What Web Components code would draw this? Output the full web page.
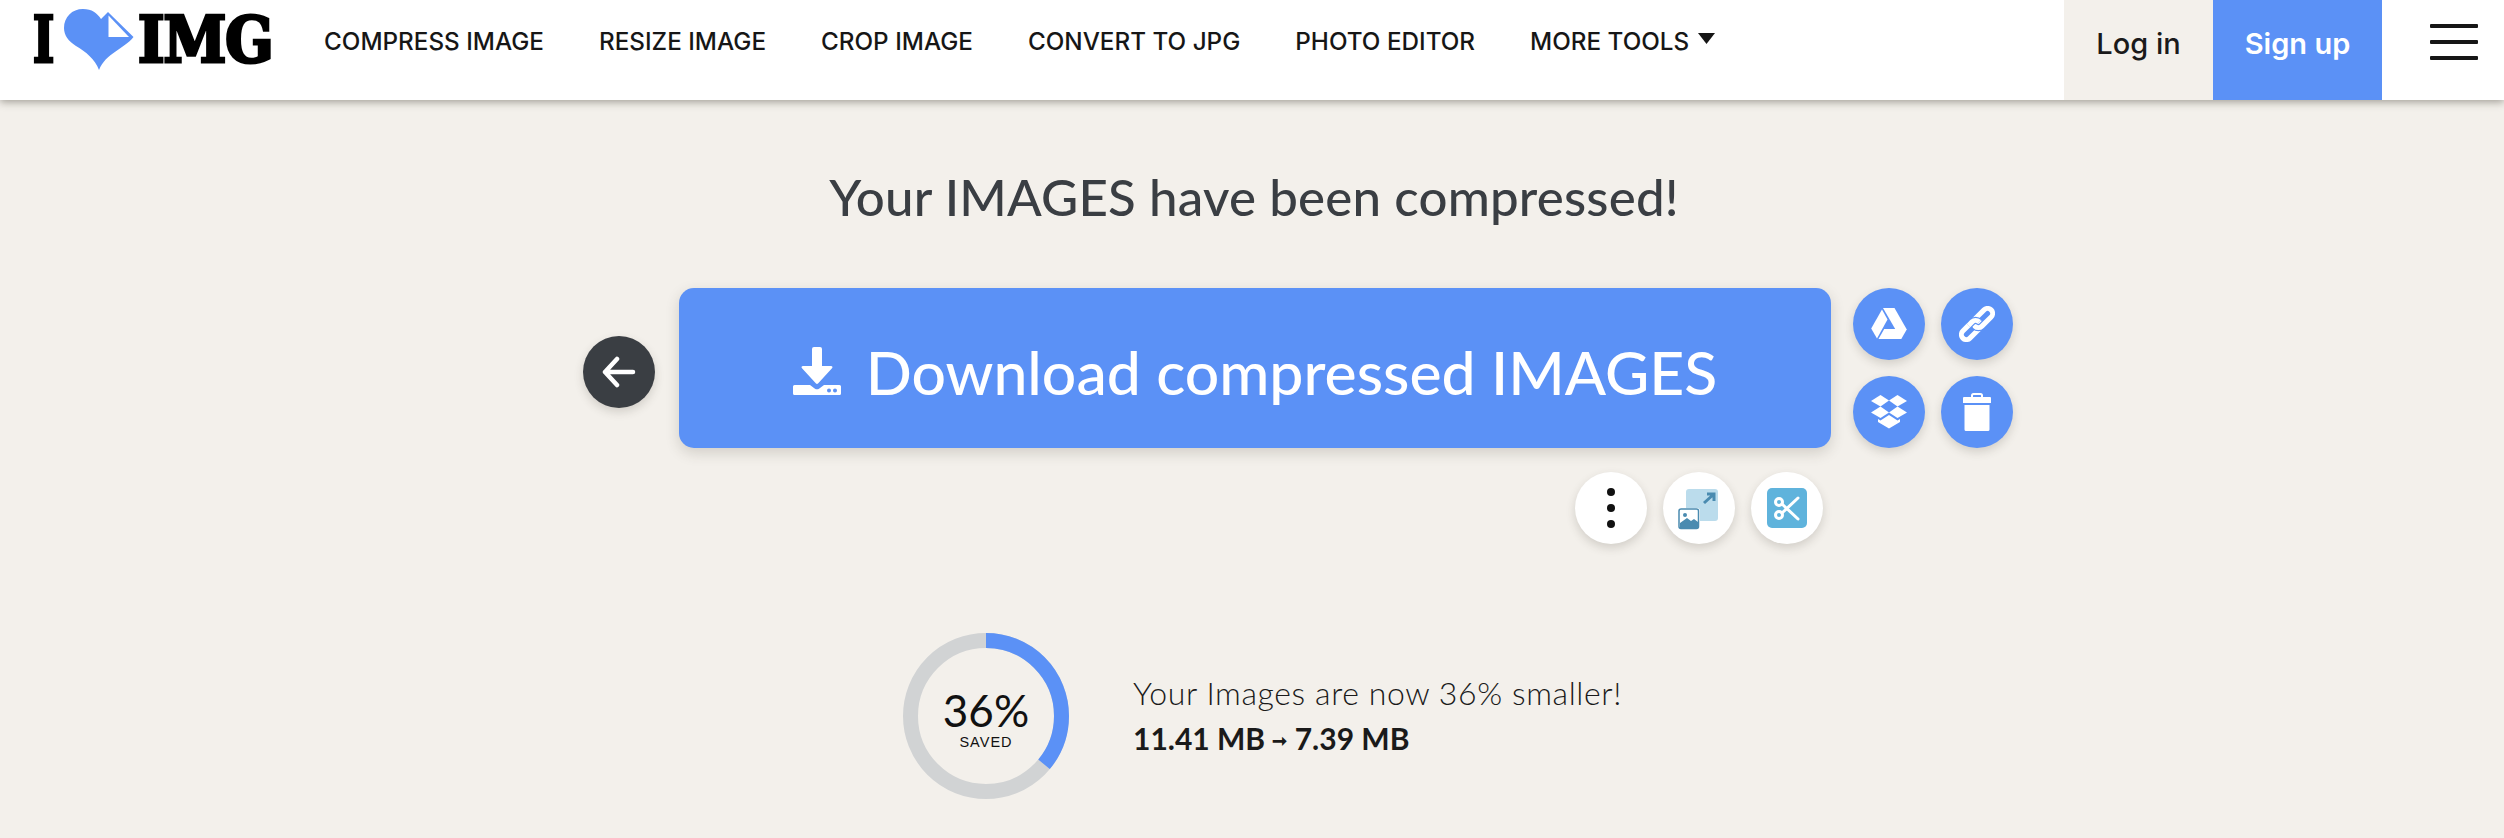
<!DOCTYPE html>
<html lang="en">
<head>
<meta charset="utf-8">
<title>Your IMAGES have been compressed!</title>
<style>
  html, body { margin: 0; height: 100%; overflow: hidden; background: #f3f0eb; }
  body { font-family: "Lato", "Open Sans", sans-serif; color: #1a1a1a; }
</style>
</head>
<body>
<site-header></site-header>
<result-panel></result-panel>

<script>
const BLUE = "#5b91f6";

class SiteLogo extends HTMLElement {
  constructor() {
    super();
    this.attachShadow({ mode: "open" });
    this.shadowRoot.innerHTML = `
<style>
  :host { display: flex; align-items: center; height: 100px; width: 289px; padding-left: 33px; box-sizing: border-box; flex: none; }
  .word {
    font: 700 63px/1 "DejaVu Serif Condensed", "DejaVu Serif", serif;
    color: #000;
    -webkit-text-stroke: 3px #000;
    letter-spacing: -1px;
    display: inline-block;
    transform-origin: left center;
    margin-top: -20px;
  }
  .i { width: 30px; transform: scaleX(.8); }
  .img { transform: scaleX(1); margin-left: 1px; }
  svg { width: 71px; height: 62px; margin: -21px 2px 0 1px; flex: none; }
</style>
<span class="word i">I</span>
<svg viewBox="0 0 71 62">
  <path d="M35 61C31 50 22 43 12 37C4 32 0 26 0 19C0 8 8 0 19 0C28 0 33 4 37 10L44 3L69.500 28C60 40 42 44 35 61Z" fill="${BLUE}"/>
  <path d="M44.500 6.500 65 28H44.500Z" fill="#fff"/>
</svg>
<span class="word img">IMG</span>`;
  }
}

class NavLink extends HTMLElement {
  constructor() {
    super();
    this.attachShadow({ mode: "open" });
    this.shadowRoot.innerHTML = `
<style>
  :host { display: inline-flex; align-items: center; gap: 9px; white-space: nowrap; font: 500 24.250px/1 "Inter", sans-serif; color: #161616; }
  svg { width: 17px; height: 11px; margin-top: -7px; display: none; }
  :host([caret]) svg { display: block; }
</style>
<slot></slot>
<svg viewBox="0 0 17 11"><path d="M0 0H17L8.500 11Z" fill="#161616"/></svg>`;
  }
}

class SiteHeader extends HTMLElement {
  constructor() {
    super();
    this.attachShadow({ mode: "open" });
    this.shadowRoot.innerHTML = `
<style>
  :host { display: flex; height: 100px; background: #fff; box-shadow: 0 2px 8px rgba(60,55,45,.45); position: relative; font-family: "Inter", sans-serif; }
  nav { display: flex; align-items: center; gap: 55px; flex: 1; padding: 0 0 0 35px; height: 84px; }
  .auth { display: flex; align-items: center; justify-content: center; height: 100px; font-size: 29px; padding-bottom: 14px; box-sizing: border-box; }
  .login { width: 149px; background: #f3f0eb; color: #1a1a1a; font-weight: 500; }
  .signup { width: 169px; background: ${BLUE}; color: #fff; font-weight: 600; }
  .burger { width: 122px; padding: 24px 26px 0 48px; box-sizing: border-box; display: flex; flex-direction: column; gap: 12px; }
  .burger i { display: block; height: 4px; width: 48px; background: #161616; border-radius: 1px; }
</style>
<site-logo></site-logo>
<nav>
  <nav-link>COMPRESS IMAGE</nav-link>
  <nav-link>RESIZE IMAGE</nav-link>
  <nav-link>CROP IMAGE</nav-link>
  <nav-link>CONVERT TO JPG</nav-link>
  <nav-link>PHOTO EDITOR</nav-link>
  <nav-link caret>MORE TOOLS</nav-link>
</nav>
<div class="auth login">Log in</div>
<div class="auth signup">Sign up</div>
<div class="burger"><i></i><i></i><i></i></div>`;
  }
}

class RoundBtn extends HTMLElement {
  constructor() {
    super();
    this.attachShadow({ mode: "open" });
    this.shadowRoot.innerHTML = `
<style>
  :host { display: flex; align-items: center; justify-content: center; width: 72px; height: 72px; border-radius: 50%; background: ${BLUE}; box-shadow: 0 4px 10px rgba(60,55,45,.18); }
  :host([tone="white"]) { background: #fff; }
  :host([tone="dark"]) { background: #3a3e43; }
  ::slotted(svg) { display: block; }
</style>
<slot></slot>`;
  }
}

class DownloadBtn extends HTMLElement {
  constructor() {
    super();
    this.attachShadow({ mode: "open" });
    this.shadowRoot.innerHTML = `
<style>
  :host { display: flex; align-items: center; justify-content: center; gap: 25px; height: 160px; padding-top: 8px; box-sizing: border-box; border-radius: 15px; background: ${BLUE}; color: #fff; font: 500 60.700px/1 "Lato", sans-serif; box-shadow: 0 5px 14px rgba(60,55,45,.18); white-space: nowrap; }
  svg { width: 48px; height: 48px; flex: none; margin-top: -2px; }
</style>
<svg viewBox="0 0 48 48" fill="#fff">
  <path d="M19 2a2 2 0 0 1 2-2h6a2 2 0 0 1 2 2v17h9c1.400 0 2 1.200 1 2.300L25 36.500c-.6.600-1.400.600-2 0L9 21.300C8 20.200 8.600 19 10 19h9Z"/>
  <path fill-rule="evenodd" d="M1.500 38h15.500l5 3.700c1.200.8 2.800.8 4 0l5-3.700h15.500a1.500 1.500 0 0 1 1.500 1.500v7a1.500 1.500 0 0 1-1.500 1.500h-45a1.500 1.500 0 0 1-1.500-1.500v-7a1.500 1.500 0 0 1 1.500-1.500ZM36 41.500a2 2 0 1 0 0 4 2 2 0 0 0 0-4Zm6 0a2 2 0 1 0 0 4 2 2 0 0 0 0-4Z"/>
</svg>
<slot></slot>`;
  }
}

class SavedRing extends HTMLElement {
  constructor() {
    super();
    this.attachShadow({ mode: "open" });
    const c = 2 * Math.PI * 75.5;
    const pct = +this.getAttribute("value") || 36;
    this.shadowRoot.innerHTML = `
<style>
  :host { display: grid; width: 166px; height: 166px; flex: none; }
  :host > * { grid-area: 1 / 1; }
  svg { width: 166px; height: 166px; }
  .label { display: flex; flex-direction: column; align-items: center; justify-content: center; padding-top: 5px; color: #111; }
  b { font: 400 44px/46px "Lato", sans-serif; }
  span { font: 400 14.500px/18px "Liberation Sans", sans-serif; letter-spacing: 1px; }
</style>
<svg viewBox="0 0 166 166" fill="none" stroke-width="15">
  <circle cx="83" cy="83" r="75.500" stroke="#d1d3d4"/>
  <circle cx="83" cy="83" r="75.500" stroke="${BLUE}" stroke-dasharray="${c * pct / 100} ${c}" transform="rotate(-90 83 83)"/>
</svg>
<div class="label"><b>${pct}%</b><span>SAVED</span></div>`;
  }
}

class ResultPanel extends HTMLElement {
  constructor() {
    super();
    this.attachShadow({ mode: "open" });
    this.shadowRoot.innerHTML = `
<style>
  :host { display: block; }
  h1 { margin: 0; padding: 67px 0 0 4px; text-align: center; font: 500 51px/60px "Lato", sans-serif; letter-spacing: .2px; color: #3a3e43; }
  .actions { display: grid; grid-template-columns: 72px 1152px 160px; column-gap: 23px; row-gap: 24px; justify-content: center; align-items: center; margin-top: 61px; padding-left: 94px; }
  .back { margin: 8px 0 0 -1px; }
  .side { display: grid; grid-template-columns: 72px 72px; gap: 16px; margin-left: -1px; }
  .tools { grid-column: 2; display: flex; justify-content: flex-end; gap: 16px; padding-right: 8px; }
  .stats { display: flex; align-items: center; gap: 64px; margin-top: 89px; padding-left: 903px; }
  .copy { font-family: "Lato", sans-serif; color: #1a1a1a; }
  .copy p { margin: 0; font-size: 32px; line-height: 42px; font-weight: 300; letter-spacing: .6px; }
  .copy strong { display: block; margin-top: 3px; font-size: 30px; line-height: 42px; font-weight: 700; }
  .copy small { font-size: 18px; vertical-align: 3px; }
</style>
<h1>Your IMAGES have been compressed!</h1>
<div class="actions">
  <round-btn class="back" tone="dark">
    <svg width="34" height="32" viewBox="0 0 34 32" fill="none" stroke="#fff" stroke-width="4.500" stroke-linecap="round" stroke-linejoin="round"><path d="M31 16H3M15 3 3 16l12 13"/></svg>
  </round-btn>
  <download-btn>Download compressed IMAGES</download-btn>
  <div class="side">
    <round-btn>
      <svg width="36" height="32" viewBox="0 0 36 32" fill="#fff"><path d="M12 0h11.500l12 21H24.200Z"/><path d="M11 1.500l5.500 10L6 30.500.2 20.500Z"/><path d="M7.500 31 13.200 21H36l-5.700 10Z"/></svg>
    </round-btn>
    <round-btn>
      <svg width="36" height="36" viewBox="0 0 36 36" fill="none" stroke-width="5">
        <g transform="rotate(-45 18 18)">
          <rect x="-2" y="13" width="23" height="10" rx="5" stroke="#fff"/>
          <rect x="15" y="13" width="23" height="10" rx="5" stroke="${BLUE}" stroke-width="7.500"/>
          <rect x="15" y="13" width="23" height="10" rx="5" stroke="#fff"/>
          <path d="M11 13h5a5 5 0 0 1 5 5" stroke="${BLUE}" stroke-width="7.500"/>
          <path d="M11 13h5a5 5 0 0 1 5 5" stroke="#fff"/>
        </g>
      </svg>
    </round-btn>
    <round-btn>
      <svg width="36" height="34" viewBox="0 0 36 34" fill="#fff"><path d="M9.500 0 18 5.500 9.500 11.500 0 6Z"/><path d="M26.500 0 36 6l-9.500 5.500L18 5.500Z"/><path d="M9.500 11.500 18 17.500l-8.500 5.500L0 17.500Z"/><path d="M26.500 11.500 36 17.500 26.500 23 18 17.500Z"/><path d="M18 20l8.500 5.500 2.500-1.500v3L18 33.500 7 27v-3l2.500 1.500Z"/></svg>
    </round-btn>
    <round-btn>
      <svg width="28" height="38" viewBox="0 0 28 38" fill="#fff"><path d="M9 5V2.500A1.500 1.500 0 0 1 10.500 1h7A1.500 1.500 0 0 1 19 2.500V5" fill="none" stroke="#fff" stroke-width="2"/><path d="M1 4h26a1 1 0 0 1 1 1v5H0V5a1 1 0 0 1 1-1Z"/><path d="M1.500 12h25v24.500a1.500 1.500 0 0 1-1.500 1.500H3a1.500 1.500 0 0 1-1.500-1.500Z"/></svg>
    </round-btn>
  </div>
  <div class="tools">
    <round-btn tone="white">
      <svg width="8" height="40" viewBox="0 0 8 40" fill="#111"><circle cx="4" cy="4" r="4"/><circle cx="4" cy="20" r="4"/><circle cx="4" cy="36" r="4"/></svg>
    </round-btn>
    <round-btn tone="white">
      <svg width="42" height="42" viewBox="0 0 42 42" style="margin-top:1px"><rect x="8" y="1" width="32" height="32" rx="3" fill="#bbdcec"/><path d="M26 15 36 6M29 6h7v7" fill="none" stroke="#4a8bb0" stroke-width="3"/><rect x="1" y="21" width="20" height="20" rx="2" fill="#fff" stroke="#fff" stroke-width="2"/><rect x="1" y="21" width="19.500" height="19.500" rx="2" fill="#fff" stroke="#4a8bb0" stroke-width="1.500"/><circle cx="7" cy="27" r="2" fill="#4a8bb0"/><path d="M2 39V35L9 30 13 33 16 31 20 34V40H2Z" fill="#4a8bb0"/></svg>
    </round-btn>
    <round-btn tone="white">
      <svg width="40" height="40" viewBox="0 0 40 40"><rect width="40" height="40" rx="5" fill="#5fb3dc"/><g fill="none" stroke="#fff" stroke-width="3" stroke-linecap="round"><circle cx="12" cy="14" r="3.500"/><circle cx="12" cy="27" r="3.500"/><path d="M15 16 31 31M15 25 31 10"/></g></svg>
    </round-btn>
  </div>
</div>
<div class="stats">
  <saved-ring value="36"></saved-ring>
  <div class="copy">
    <p>Your Images are now 36% smaller!</p>
    <strong>11.41 MB <small>&#10142;</small> 7.39 MB</strong>
  </div>
</div>`;
  }
}

customElements.define("site-logo", SiteLogo);
customElements.define("nav-link", NavLink);
customElements.define("site-header", SiteHeader);
customElements.define("round-btn", RoundBtn);
customElements.define("download-btn", DownloadBtn);
customElements.define("saved-ring", SavedRing);
customElements.define("result-panel", ResultPanel);
</script>
</body>
</html>
